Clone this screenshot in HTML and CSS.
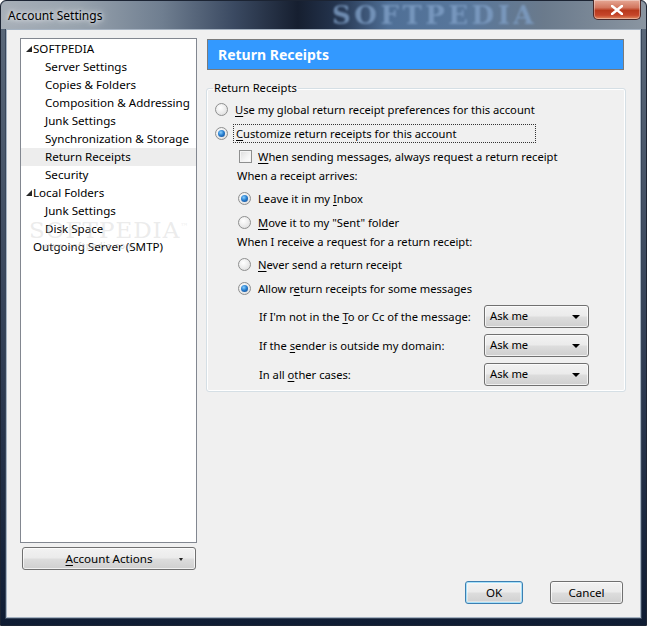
FILE: index.html
```html
<!DOCTYPE html>
<html lang="en">
<head>
  <meta charset="UTF-8" />
  <title>Account Settings</title>
  <link rel="stylesheet" href="styles.css">
</head>
<body>
  <div class="window">
    <div class="titlebar">
      <span class="title">Account Settings</span>
      <span class="aero-mark">SOFTPEDIA</span>
      <button class="close-btn">
        <svg width="12" height="10" viewBox="0 0 12 10"><path d="M1 1 L11 9 M11 1 L1 9" stroke="#fff" stroke-width="2.6" stroke-linecap="square"/></svg>
      </button>
    </div>

    <div class="client">
      <div class="side">
        <div class="tree">
          <div class="node top"><span class="twisty"></span>SOFTPEDIA</div>
          <div class="node child">Server Settings</div>
          <div class="node child">Copies &amp; Folders</div>
          <div class="node child">Composition &amp; Addressing</div>
          <div class="node child">Junk Settings</div>
          <div class="node child">Synchronization &amp; Storage</div>
          <div class="node child selected">Return Receipts</div>
          <div class="node child">Security</div>
          <div class="node top"><span class="twisty"></span>Local Folders</div>
          <div class="node child">Junk Settings</div>
          <div class="node child">Disk Space</div>
          <div class="node top">Outgoing Server (SMTP)</div>
          <div class="watermark">SOFTPEDIA<sup>™</sup><small>www.softpedia.com</small></div>
        </div>
        <button class="btn actions"><u>A</u>ccount Actions<span class="mini-arrow"></span></button>
      </div>

      <div class="main">
        <div class="page-header">Return Receipts</div>

        <fieldset class="group">
          <legend>Return Receipts</legend>
          <label class="opt"><span class="radio"></span><span><u>U</u>se my global return receipt preferences for this account</span></label>
          <label class="opt"><span class="radio on"></span><span class="focus"><u>C</u>ustomize return receipts for this account</span></label>

          <div class="custom">
            <label class="opt check-row"><span class="check"></span><span><u>W</u>hen sending messages, always request a return receipt</span></label>

            <div class="caption">When a receipt arrives:</div>
            <label class="opt sub"><span class="radio on"></span><span>Leave it in my <u>I</u>nbox</span></label>
            <label class="opt sub"><span class="radio"></span><span><u>M</u>ove it to my "Sent" folder</span></label>

            <div class="caption">When I receive a request for a return receipt:</div>
            <label class="opt sub"><span class="radio"></span><span><u>N</u>ever send a return receipt</span></label>
            <label class="opt sub"><span class="radio on"></span><span>Allow r<u>e</u>turn receipts for some messages</span></label>

            <div class="rules">
              <span>If I'm not in the <u>T</u>o or Cc of the message:</span>
              <div class="select">Ask me<span class="arrow"></span></div>
              <span>If the <u>s</u>ender is outside my domain:</span>
              <div class="select">Ask me<span class="arrow"></span></div>
              <span>In all <u>o</u>ther cases:</span>
              <div class="select">Ask me<span class="arrow"></span></div>
            </div>
          </div>
        </fieldset>

        <div class="footer">
          <button class="btn ok">OK</button>
          <button class="btn cancel">Cancel</button>
        </div>
      </div>
    </div>
  </div>
</body>
</html>
```

FILE: styles.css
```css
body {
  margin: 0;
  width: 647px;
  height: 626px;
  overflow: hidden;
  font-family: 'Noto Sans', 'Open Sans', sans-serif;
  font-size: 11.2px;
  color: #000;
}

.window {
  width: 647px;
  height: 626px;
  display: flex;
  flex-direction: column;
  box-sizing: border-box;
  background: linear-gradient(to bottom, #5d6b7c 0%, #2e3b52 60%, #0f1c33 100%);
  border: 1px solid #1c2433;
  border-radius: 6px 6px 0 0;
}

.titlebar {
  position: relative;
  height: 28px;
  display: flex;
  align-items: center;
  padding-left: 7px;
  background: linear-gradient(to right, #a7afb8 0%, #98a3ae 12%, #6f7e90 25%, #3b4a62 36%, #161f30 46%, #24344e 52%, #4f6f96 60%, #58779c 72%, #6a7a8c 84%, #8a95a1 100%);
  border-radius: 6px 6px 0 0;
}

.title {
  color: #000;
  font-size: 12px;
  text-shadow: 0 0 8px rgba(255,255,255,0.9), 0 0 4px rgba(255,255,255,0.9);
}

.aero-mark {
  position: absolute;
  left: 331px;
  top: 1px;
  line-height: 26px;
  font-family: 'DejaVu Serif', serif;
  font-weight: bold;
  font-size: 26px;
  letter-spacing: 3.5px;
  color: #7f9fc6;
  filter: blur(1.2px);
  opacity: 0.8;
}

.close-btn {
  position: absolute;
  right: 5px;
  top: -1px;
  width: 48px;
  height: 20px;
  border: 1px solid #4a2a2a;
  border-top: none;
  border-radius: 0 0 5px 5px;
  background: linear-gradient(to bottom, #e6a895 0%, #d2765f 40%, #b8391c 55%, #c6462a 80%, #e08a60 100%);
  box-shadow: inset 0 0 0 1px rgba(255,255,255,0.35);
  display: flex;
  align-items: center;
  justify-content: center;
  padding: 0;
}

.client {
  flex: 1;
  margin: 0 5px 7px 5px;
  background: #f0f0f0;
  border: 1px solid #a6b3c2;
  box-shadow: 0 0 0 1px #38465a;
  display: flex;
  gap: 9px;
  padding: 8px 14px 13px 13px;
}

.side {
  width: 177px;
  display: flex;
  flex-direction: column;
  margin-bottom: 34px;
}

.tree {
  position: relative;
  flex: 1;
  background: #fff;
  border: 1px solid #828790;
  padding-top: 1px;
  overflow: hidden;
  font-size: 11.6px;
}

.node {
  height: 18px;
  line-height: 18px;
  white-space: nowrap;
}

.node.top {
  padding-left: 12px;
}

.node.child {
  padding-left: 24px;
}

.node.selected {
  background: #ededed;
}

.twisty {
  display: inline-block;
  width: 0;
  height: 0;
  margin-left: -7px;
  margin-right: 1px;
  border-left: 6px solid transparent;
  border-bottom: 6px solid #262626;
  vertical-align: 1px;
}

.watermark {
  position: absolute;
  left: 8px;
  top: 177px;
  font-family: 'DejaVu Serif', serif;
  font-size: 23px;
  letter-spacing: 1px;
  color: rgba(205,205,205,0.4);
  line-height: 22px;
  pointer-events: none;
}

.watermark sup {
  font-size: 8px;
}

.watermark small {
  display: block;
  font-family: 'Noto Sans', sans-serif;
  font-size: 8px;
  line-height: 9px;
  padding-left: 14px;
  color: rgba(175,175,175,0.55);
}

.btn {
  font-family: inherit;
  font-size: 11.6px;
  color: #000;
  height: 23px;
  border: 1px solid #707070;
  border-radius: 3px;
  background: linear-gradient(to bottom, #f2f2f2 0%, #ebebeb 48%, #dddddd 52%, #cfcfcf 100%);
  box-shadow: inset 0 0 0 1px rgba(255,255,255,0.7);
  padding: 0;
  cursor: default;
}

.actions {
  position: relative;
  margin-top: 4px;
  margin-left: 2px;
  width: 174px;
}

.mini-arrow {
  position: absolute;
  right: 12px;
  top: 10px;
  border-left: 2px solid transparent;
  border-right: 2px solid transparent;
  border-top: 3px solid #222;
}

.main {
  flex: 1;
  display: flex;
  flex-direction: column;
}

.page-header {
  margin: 1px 2px 0 1px;
  height: 29px;
  line-height: 29px;
  padding-left: 10px;
  background: #3399ff;
  border: 1px solid #7a7a7a;
  color: #fff;
  font-weight: bold;
  font-size: 14px;
}

.group {
  margin: 11px 0 0 0;
  padding: 2px 0 5px 8px;
  border: 1px solid #d5dfe5;
  border-radius: 3px;
  box-shadow: inset 0 0 0 1px #fff;
}

.group legend {
  padding: 0 1px;
  margin-left: -2px;
  line-height: 14px;
}

.opt {
  display: flex;
  align-items: center;
  height: 24px;
  gap: 7px;
  white-space: nowrap;
}

.opt u, .rules u, .actions u {
  text-decoration-thickness: 1px;
  text-underline-offset: 2px;
}

.radio {
  width: 11px;
  height: 11px;
  border: 1px solid #8e8f8f;
  border-radius: 50%;
  background: radial-gradient(circle at 40% 35%, #ffffff 0%, #f0f0f0 40%, #d8d8d8 100%);
  flex-shrink: 0;
  position: relative;
}

.radio.on::after {
  content: "";
  position: absolute;
  left: 2px;
  top: 2px;
  width: 7px;
  height: 7px;
  border-radius: 50%;
  background: radial-gradient(circle at 40% 35%, #8ad0ff 0%, #2a80d0 45%, #0b3f86 100%);
}

.focus {
  outline: 1px dotted #333;
  outline-offset: 1px;
  padding: 0 1px;
  width: 297px;
}

.custom {
  padding-left: 22px;
}

.check-row {
  gap: 6px;
  padding-left: 2px;
  height: 23px;
}

.check {
  width: 11px;
  height: 11px;
  border: 1px solid #8e8f8f;
  background: linear-gradient(135deg, #dcdcdc 0%, #f4f4f4 60%, #ffffff 100%);
  box-shadow: inset 0 0 0 1px #f4f4f4;
  flex-shrink: 0;
}

.caption {
  height: 18px;
  line-height: 16px;
}

.opt.sub {
  padding-left: 1px;
}

.rules {
  display: grid;
  grid-template-columns: 225px 105px;
  row-gap: 6px;
  align-items: center;
  padding: 5px 0 0 22px;
  white-space: nowrap;
}

.select {
  position: relative;
  height: 21px;
  line-height: 20px;
  padding-left: 5px;
  border: 1px solid #707070;
  border-radius: 3px;
  background: linear-gradient(to bottom, #f2f2f2 0%, #ebebeb 48%, #dddddd 52%, #cfcfcf 100%);
  box-shadow: inset 0 0 0 1px rgba(255,255,255,0.7);
}

.arrow {
  position: absolute;
  right: 8px;
  top: 9px;
  border-left: 4px solid transparent;
  border-right: 4px solid transparent;
  border-top: 4px solid #000;
}

.footer {
  margin-top: auto;
  display: flex;
  justify-content: flex-end;
  gap: 27px;
  padding-right: 3px;
}

.ok {
  width: 58px;
  border-color: #3c7fb1;
  box-shadow: inset 0 0 0 1px #a6e0fa, inset 0 0 0 2px rgba(255,255,255,0.4);
}

.cancel {
  width: 73px;
}
```
